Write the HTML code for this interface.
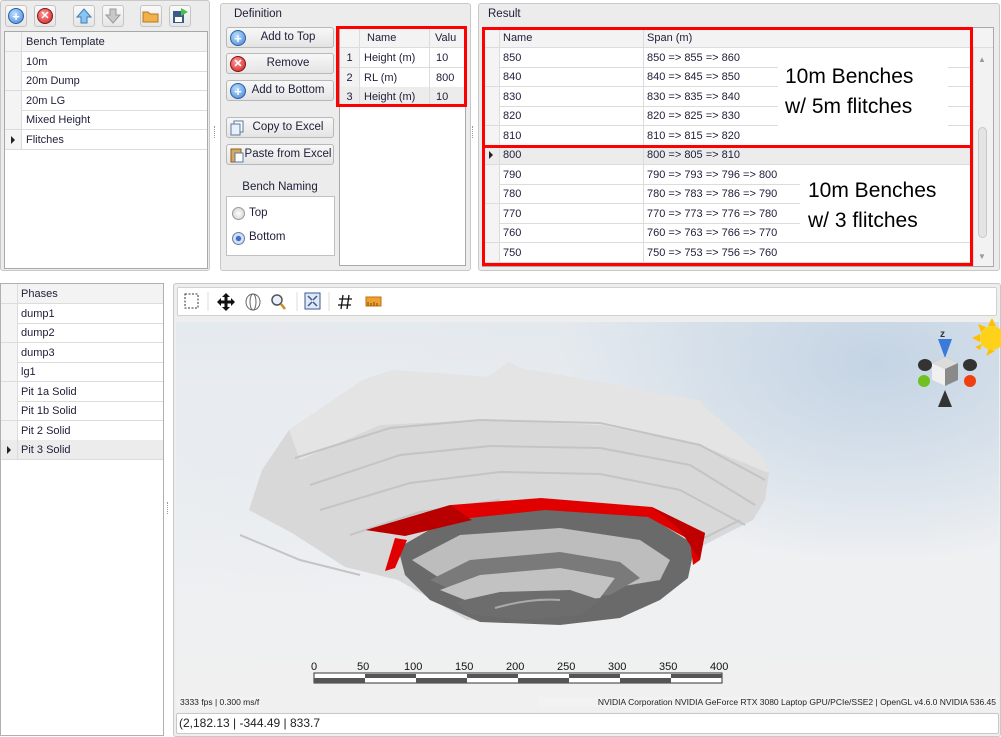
<!DOCTYPE html>
<html><head><meta charset="utf-8">
<style>
*{box-sizing:border-box;margin:0;padding:0}
body{width:1001px;height:737px;background:#fff;position:relative;overflow:hidden;font-family:"Liberation Sans",sans-serif;font-size:11px;color:#20203a}
.a{position:absolute}
.panel{position:absolute;background:#ececec;border:1px solid #c8c8c8;border-radius:3px}
.grid{position:absolute;background:#fff;border:1px solid #a9a9a9}
.row{position:absolute;left:0;right:0;height:20px;border-bottom:1px solid #dcdcdc;line-height:20px}
.ind{position:absolute;left:0;top:0;bottom:0;width:17px;border-right:1px solid #dcdcdc;background:#f4f4f4}
.hdr{background:#f3f3f3}
.btn{position:absolute;left:226px;width:108px;height:21px;border:1px solid #b8b8b8;border-radius:3px;background:linear-gradient(#f8f8f8,#e4e4e4);text-align:center;line-height:19px;font-size:11.5px;padding-left:16px}
.ico{position:absolute;left:3px;top:2px;width:16px;height:16px;border-radius:50%;color:#fff;font-weight:bold;font-size:13px;line-height:15px;text-align:center}
.blue{background:radial-gradient(circle at 40% 35%,#bfe0ff,#3d83d6);border:1px solid #2a5fa5}
.red{background:radial-gradient(circle at 40% 35%,#ff9a9a,#c81e1e);border:1px solid #8a1010}
.tb{position:absolute;top:5px;width:22px;height:22px;border:1px solid #c4c4c4;border-radius:3px;background:linear-gradient(#fafafa,#e6e6e6)}
.redbox{position:absolute;border:3px solid #f00}
.tri{position:absolute;left:6px;top:6px;width:0;height:0;border-left:4px solid #222;border-top:4px solid transparent;border-bottom:4px solid transparent}
</style></head><body>

<div class="panel" style="left:0;top:0;width:210px;height:271px"></div>
<div class="tb" style="left:5px"><div class="ico blue" style="left:2px;top:2px">+</div></div>
<div class="tb" style="left:34px"><div class="ico red" style="left:2px;top:2px;font-size:11px">✕</div></div>
<div class="tb" style="left:73px"><svg width="20" height="20" style="position:absolute;left:0;top:0"><path d="M10 3 L17 11 L13 11 L13 17 L7 17 L7 11 L3 11 Z" fill="#8cc4f0" stroke="#3b7cc0"/></svg></div>
<div class="tb" style="left:102px"><svg width="20" height="20" style="position:absolute;left:0;top:0"><path d="M10 17 L17 9 L13 9 L13 3 L7 3 L7 9 L3 9 Z" fill="#c8c8c8" stroke="#9a9a9a"/></svg></div>
<div class="tb" style="left:140px"><svg width="20" height="20" style="position:absolute;left:0;top:0"><path d="M2 6 L7 6 L9 8 L17 8 L17 16 L2 16 Z" fill="#f0b04a" stroke="#b57a1a"/></svg></div>
<div class="tb" style="left:169px"><svg width="20" height="20" style="position:absolute;left:0;top:0"><rect x="3" y="5" width="11" height="12" fill="#3a5a8c"/><rect x="5" y="11" width="7" height="5" fill="#fff"/><path d="M11 2 L18 6 L11 10 Z" fill="#4cc04c"/></svg></div>
<div class="grid" style="left:4px;top:31px;width:204px;height:238px">
 <div class="row hdr" style="top:0"><div class="ind"></div><span style="position:absolute;left:21px">Bench Template</span></div>
 <div class="row" style="top:20px"><div class="ind"></div><span style="position:absolute;left:21px">10m</span></div>
 <div class="row" style="top:39px"><div class="ind"></div><span style="position:absolute;left:21px">20m Dump</span></div>
 <div class="row" style="top:59px"><div class="ind"></div><span style="position:absolute;left:21px">20m LG</span></div>
 <div class="row" style="top:78px"><div class="ind"></div><span style="position:absolute;left:21px">Mixed Height</span></div>
 <div class="row" style="top:98px"><div class="ind"><div class="tri"></div></div><span style="position:absolute;left:21px">Flitches</span></div>
</div>

<div class="panel" style="left:220px;top:3px;width:251px;height:268px"></div>
<div class="a" style="left:234px;top:8px;font-size:11.5px">Definition</div>
<div class="btn" style="top:27px"><div class="ico blue">+</div>Add to Top</div>
<div class="btn" style="top:53px"><div class="ico red" style="font-size:11px">✕</div>Remove</div>
<div class="btn" style="top:80px"><div class="ico blue">+</div>Add to Bottom</div>
<div class="btn" style="top:117px"><svg class="a" style="left:3px;top:2px" width="14" height="16"><rect x="4" y="1" width="9" height="11" fill="#fff" stroke="#5a7aa0"/><rect x="1" y="4" width="9" height="11" fill="#e8f0fa" stroke="#5a7aa0"/></svg>Copy to Excel</div>
<div class="btn" style="top:144px"><svg class="a" style="left:3px;top:2px" width="14" height="16"><rect x="1" y="2" width="10" height="13" fill="#d9a860" stroke="#8a6020"/><rect x="5" y="6" width="8" height="9" fill="#fff" stroke="#5a7aa0"/></svg>Paste from Excel</div>
<div class="a" style="left:226px;top:181px;width:108px;text-align:center;font-size:11.5px">Bench Naming</div>
<div class="a" style="left:226px;top:196px;width:109px;height:60px;background:#fff;border:1px solid #c0c0c0"></div>
<div class="a" style="left:232px;top:207px;width:13px;height:13px;border-radius:50%;border:1px solid #999;background:radial-gradient(#fff,#ccc)"></div>
<div class="a" style="left:249px;top:207px;font-size:11.5px">Top</div>
<div class="a" style="left:232px;top:232px;width:13px;height:13px;border-radius:50%;border:1px solid #6a7fa8;background:radial-gradient(#3d6fd0 30%,#dfe8f8 40%,#b9c7de)"></div>
<div class="a" style="left:249px;top:231px;font-size:11.5px">Bottom</div>
<div class="grid" style="left:339px;top:27px;width:127px;height:239px">
 <div class="row hdr" style="top:0"><div class="ind" style="width:20px"></div><span class="a" style="left:27px">Name</span><span class="a" style="left:95px">Valu</span></div>
 <div class="row" style="top:20px"><div class="ind" style="width:20px;text-align:center;background:#f2f2f2">1</div><span class="a" style="left:24px">Height (m)</span><span class="a" style="left:96px">10</span></div>
 <div class="row" style="top:40px"><div class="ind" style="width:20px;text-align:center;background:#f2f2f2">2</div><span class="a" style="left:24px">RL (m)</span><span class="a" style="left:96px">800</span></div>
 <div class="row" style="top:59px;background:#ececec"><div class="ind" style="width:20px;text-align:center;background:#ececec">3</div><span class="a" style="left:24px">Height (m)</span><span class="a" style="left:96px">10</span></div>
 <div class="a" style="left:89px;top:0;width:1px;height:79px;background:#dcdcdc"></div>
</div>
<div class="redbox" style="left:336px;top:26px;width:131px;height:81px"></div>
<div class="a" style="left:214px;top:126px;width:2px;height:12px;border-left:1px dotted #999"></div>
<div class="a" style="left:472px;top:126px;width:2px;height:12px;border-left:1px dotted #999"></div>

<div class="panel" style="left:478px;top:3px;width:522px;height:268px"></div>
<div class="a" style="left:488px;top:8px;font-size:11.5px">Result</div>
<div class="grid" style="left:482px;top:27px;width:512px;height:240px">
 <div class="row hdr" style="top:0"><div class="ind"></div><span class="a" style="left:20px">Name</span><span class="a" style="left:164px">Span (m)</span></div>
 <div class="row" style="top:20px"><div class="ind"></div><span class="a" style="left:20px">850</span><span class="a" style="left:164px">850 =&gt; 855 =&gt; 860</span></div>
 <div class="row" style="top:39px"><div class="ind"></div><span class="a" style="left:20px">840</span><span class="a" style="left:164px">840 =&gt; 845 =&gt; 850</span></div>
 <div class="row" style="top:59px"><div class="ind"></div><span class="a" style="left:20px">830</span><span class="a" style="left:164px">830 =&gt; 835 =&gt; 840</span></div>
 <div class="row" style="top:78px"><div class="ind"></div><span class="a" style="left:20px">820</span><span class="a" style="left:164px">820 =&gt; 825 =&gt; 830</span></div>
 <div class="row" style="top:98px"><div class="ind"></div><span class="a" style="left:20px">810</span><span class="a" style="left:164px">810 =&gt; 815 =&gt; 820</span></div>
 <div class="row" style="top:117px;background:#ececec"><div class="ind" style="background:#ececec"><div class="tri"></div></div><span class="a" style="left:20px">800</span><span class="a" style="left:164px">800 =&gt; 805 =&gt; 810</span></div>
 <div class="row" style="top:137px"><div class="ind"></div><span class="a" style="left:20px">790</span><span class="a" style="left:164px">790 =&gt; 793 =&gt; 796 =&gt; 800</span></div>
 <div class="row" style="top:156px"><div class="ind"></div><span class="a" style="left:20px">780</span><span class="a" style="left:164px">780 =&gt; 783 =&gt; 786 =&gt; 790</span></div>
 <div class="row" style="top:176px"><div class="ind"></div><span class="a" style="left:20px">770</span><span class="a" style="left:164px">770 =&gt; 773 =&gt; 776 =&gt; 780</span></div>
 <div class="row" style="top:195px"><div class="ind"></div><span class="a" style="left:20px">760</span><span class="a" style="left:164px">760 =&gt; 763 =&gt; 766 =&gt; 770</span></div>
 <div class="row" style="top:215px"><div class="ind"></div><span class="a" style="left:20px">750</span><span class="a" style="left:164px">750 =&gt; 753 =&gt; 756 =&gt; 760</span></div>
 <div class="a" style="left:160px;top:0;width:1px;height:238px;background:#dcdcdc"></div>
 <div class="a" style="left:490px;top:20px;width:20px;height:218px;background:#f2f2f2;border-left:1px solid #e0e0e0"></div>
 <div class="a" style="left:495px;top:99px;width:9px;height:111px;background:#e4e4e4;border:1px solid #c8c8c8;border-radius:5px"></div>
 <div class="a" style="left:495px;top:27px;font-size:8px;color:#999">▲</div>
 <div class="a" style="left:495px;top:224px;font-size:8px;color:#999">▼</div>
</div>
<div class="a" style="left:778px;top:64px;width:170px;height:62px;background:#fff"></div>
<div class="a" style="left:785px;top:62px;font-size:21px;color:#000;line-height:30px">10m Benches<br>w/ 5m flitches</div>
<div class="a" style="left:800px;top:178px;width:170px;height:62px;background:#fff"></div>
<div class="a" style="left:808px;top:176px;font-size:21px;color:#000;line-height:30px">10m Benches<br>w/ 3 flitches</div>
<div class="redbox" style="left:482px;top:27px;width:491px;height:121px"></div>
<div class="redbox" style="left:482px;top:145px;width:491px;height:121px"></div>

<div class="grid" style="left:0;top:283px;width:164px;height:453px;border-color:#b0b0b0">
 <div class="row hdr" style="top:0"><div class="ind"></div><span class="a" style="left:20px">Phases</span></div>
 <div class="row" style="top:20px"><div class="ind"></div><span class="a" style="left:20px">dump1</span></div>
 <div class="row" style="top:39px"><div class="ind"></div><span class="a" style="left:20px">dump2</span></div>
 <div class="row" style="top:59px"><div class="ind"></div><span class="a" style="left:20px">dump3</span></div>
 <div class="row" style="top:78px"><div class="ind"></div><span class="a" style="left:20px">lg1</span></div>
 <div class="row" style="top:98px"><div class="ind"></div><span class="a" style="left:20px">Pit 1a Solid</span></div>
 <div class="row" style="top:117px"><div class="ind"></div><span class="a" style="left:20px">Pit 1b Solid</span></div>
 <div class="row" style="top:137px"><div class="ind"></div><span class="a" style="left:20px">Pit 2 Solid</span></div>
 <div class="row" style="top:156px;background:#ececec"><div class="ind" style="background:#ececec"><div class="tri"></div></div><span class="a" style="left:20px">Pit 3 Solid</span></div>
</div>
<div class="a" style="left:167px;top:502px;width:2px;height:12px;border-left:1px dotted #999"></div>

<div class="panel" style="left:173px;top:283px;width:828px;height:454px;background:#eeeeee"></div>
<div class="a" style="left:177px;top:287px;width:820px;height:29px;background:#fff;border:1px solid #d0d0d0;border-radius:2px"></div>
<svg class="a" style="left:177px;top:287px" width="260" height="29">
 <rect x="8" y="7" width="13" height="14" fill="none" stroke="#333" stroke-dasharray="2,1.5"/>
 <line x1="31" y1="5" x2="31" y2="24" stroke="#ddd"/>
 <path d="M49 6 L53 10 L50.5 10 L50.5 13.5 L54 13.5 L54 11 L58 15 L54 19 L54 16.5 L50.5 16.5 L50.5 20 L53 20 L49 24 L45 20 L47.5 20 L47.5 16.5 L44 16.5 L44 19 L40 15 L44 11 L44 13.5 L47.5 13.5 L47.5 10 L45 10 Z" fill="#111"/>
 <ellipse cx="76" cy="15" rx="7" ry="8" fill="none" stroke="#666"/><ellipse cx="76" cy="15" rx="3" ry="8" fill="none" stroke="#666"/>
 <circle cx="100" cy="13" r="5" fill="#e8f0ff" stroke="#555" stroke-width="1.5"/><line x1="104" y1="17" x2="108" y2="22" stroke="#d08a20" stroke-width="2.5"/>
 <line x1="120" y1="5" x2="120" y2="24" stroke="#ddd"/>
 <rect x="128" y="6" width="15" height="16" fill="#dfe8f4" stroke="#3a5a8c"/><path d="M131 9 L135 13 M140 9 L136 13 M131 19 L135 15 M140 19 L136 15" stroke="#3a5a8c" stroke-width="1.5"/>
 <line x1="152" y1="5" x2="152" y2="24" stroke="#ddd"/>
 <path d="M166 8 L164 22 M172 8 L170 22 M162 12 L175 12 M161 18 L174 18" stroke="#111" stroke-width="1.3"/>
 <rect x="189" y="10" width="15" height="9" fill="#f0a030" stroke="#c07010"/><path d="M191 19 V15 M194 19 V16 M197 19 V15 M200 19 V16" stroke="#7a4a00"/>
</svg>
<div class="a" style="left:176px;top:322px;width:823px;height:390px;background:radial-gradient(ellipse 320px 200px at 700px 40px,#c4d4e4,rgba(220,228,236,0) 100%),radial-gradient(ellipse 300px 180px at 100px 120px,#e8ecf0,rgba(240,240,240,0)),linear-gradient(#e4e9ee,#eef0f2 60%,#f0f0f0)"></div>
<svg class="a" style="left:0;top:0" width="1001" height="737">
 <polygon points="249,510 262,470 289,430 363,380 393,370 488,377 509,362 520,368 700,400 705,407 764,457 769,473 765,500 753,520 700,547 620,613 541,623 467,620 398,580 345,567 292,533" fill="#d8d8d8"/>
 <polygon points="289,430 363,380 393,370 488,377 509,362 520,368 700,400 705,407 764,457 769,473 700,445 600,425 480,420 380,425 300,460" fill="#e4e4e4"/>
 <g stroke="#c4c4c4" stroke-width="2" fill="none">
  <path d="M295 458 L390 428 L480 420 L600 423 L700 445 L765 480"/>
  <path d="M310 485 L400 455 L490 446 L600 448 L690 465 L755 505"/>
  <path d="M320 510 L410 483 L500 472 L600 474 L680 490 L745 525"/>
  <path d="M350 535 L420 512 L500 500"/>
  <path d="M240 535 L300 560 L360 575"/>
  <path d="M700 540 L740 520"/>
 </g>
 <polygon points="398,548 455,515 545,508 650,517 695,545 688,578 660,600 620,618 560,625 480,622 430,600 405,575" fill="#6a6a6a"/>
 <polygon points="412,560 460,535 560,528 640,540 670,560 660,580 600,590 520,592 450,585" fill="#bdbdbd"/>
 <polygon points="430,580 470,560 560,552 620,562 640,578 610,595 540,600 470,598" fill="#7a7a7a"/>
 <polygon points="440,590 480,575 560,568 615,578 600,598 530,604 470,602" fill="#c2c2c2"/>
 <polygon points="455,602 500,592 570,590 600,600 580,615 520,620 470,614" fill="#6d6d6d"/>
 <path d="M495 608 Q530 598 560 600" stroke="#aaa" stroke-width="2" fill="none"/>
 <polygon points="366,530 451,505 541,498 652,507 705,533 700,560 693,565 690,540 648,517 545,510 470,518 455,515 400,535" fill="#e00000"/>
 <polygon points="366,530 450,505 472,520 405,536" fill="#b80000"/>
 <polygon points="395,538 407,540 395,568 385,571" fill="#e00000"/>
 <polygon points="652,507 705,533 700,560 690,545 680,530" fill="#c00000"/>
 <g transform="translate(992,338)"><circle r="12" fill="#ffd21a"/><path d="M-20 0 L-12 -4 L-12 4 Z M-14 -14 L-6 -11 L-11 -6 Z M0 -20 L4 -12 L-4 -12 Z M-17 9 L-10 6 L-12 12 Z M-6 18 L-3 11 L3 13 Z" fill="#ffc000"/></g>
 <text x="940" y="337" font-family="Liberation Sans" font-size="10" font-weight="bold" fill="#333">z</text>
 <polygon points="938,339 952,339 945,358" fill="#3a7ad8"/>
 <polygon points="932,363 945,357 958,363 958,380 945,386 932,380" fill="#8a8a8a"/>
 <polygon points="932,363 945,369 945,386 932,380" fill="#f0f0f0"/>
 <polygon points="932,363 945,357 958,363 945,369" fill="#dcdcdc"/>
 <ellipse cx="925" cy="365" rx="7" ry="6" fill="#333"/>
 <ellipse cx="970" cy="365" rx="7" ry="6" fill="#333"/>
 <ellipse cx="924" cy="381" rx="6" ry="6" fill="#70c020"/>
 <ellipse cx="970" cy="381" rx="6" ry="6" fill="#f04010"/>
 <polygon points="945,390 952,407 938,407" fill="#333"/>
 <g font-family="Liberation Sans" font-size="11" fill="#111">
  <text x="311" y="670">0</text><text x="357" y="670">50</text><text x="404" y="670">100</text><text x="455" y="670">150</text><text x="506" y="670">200</text><text x="557" y="670">250</text><text x="608" y="670">300</text><text x="659" y="670">350</text><text x="710" y="670">400</text>
 </g>
 <rect x="314" y="673" width="408" height="10" fill="#fff" stroke="#333"/>
 <g fill="#555">
  <rect x="365" y="674" width="51" height="4"/><rect x="467" y="674" width="51" height="4"/><rect x="569" y="674" width="51" height="4"/><rect x="671" y="674" width="51" height="4"/>
  <rect x="314" y="678" width="51" height="5"/><rect x="416" y="678" width="51" height="5"/><rect x="518" y="678" width="51" height="5"/><rect x="620" y="678" width="51" height="5"/>
 </g>
</svg>
<div class="a" style="left:178px;top:697px;font-size:8.5px;color:#222;background:#f2f2f2;padding:0 2px">3333 fps | 0.300 ms/f</div>
<div class="a" style="left:540px;top:697px;font-size:8.5px;color:#222;background:#f2f2f2;padding:0 2px;width:460px;text-align:right;left:538px">NVIDIA Corporation NVIDIA GeForce RTX 3080 Laptop GPU/PCIe/SSE2 | OpenGL v4.6.0 NVIDIA 536.45</div>
<div class="a" style="left:176px;top:713px;width:823px;height:21px;background:#fff;border:1px solid #c8c8c8;border-radius:2px"></div>
<div class="a" style="left:179px;top:716px;font-size:12px;color:#222">(2,182.13 | -344.49 | 833.7</div>
</body></html>
